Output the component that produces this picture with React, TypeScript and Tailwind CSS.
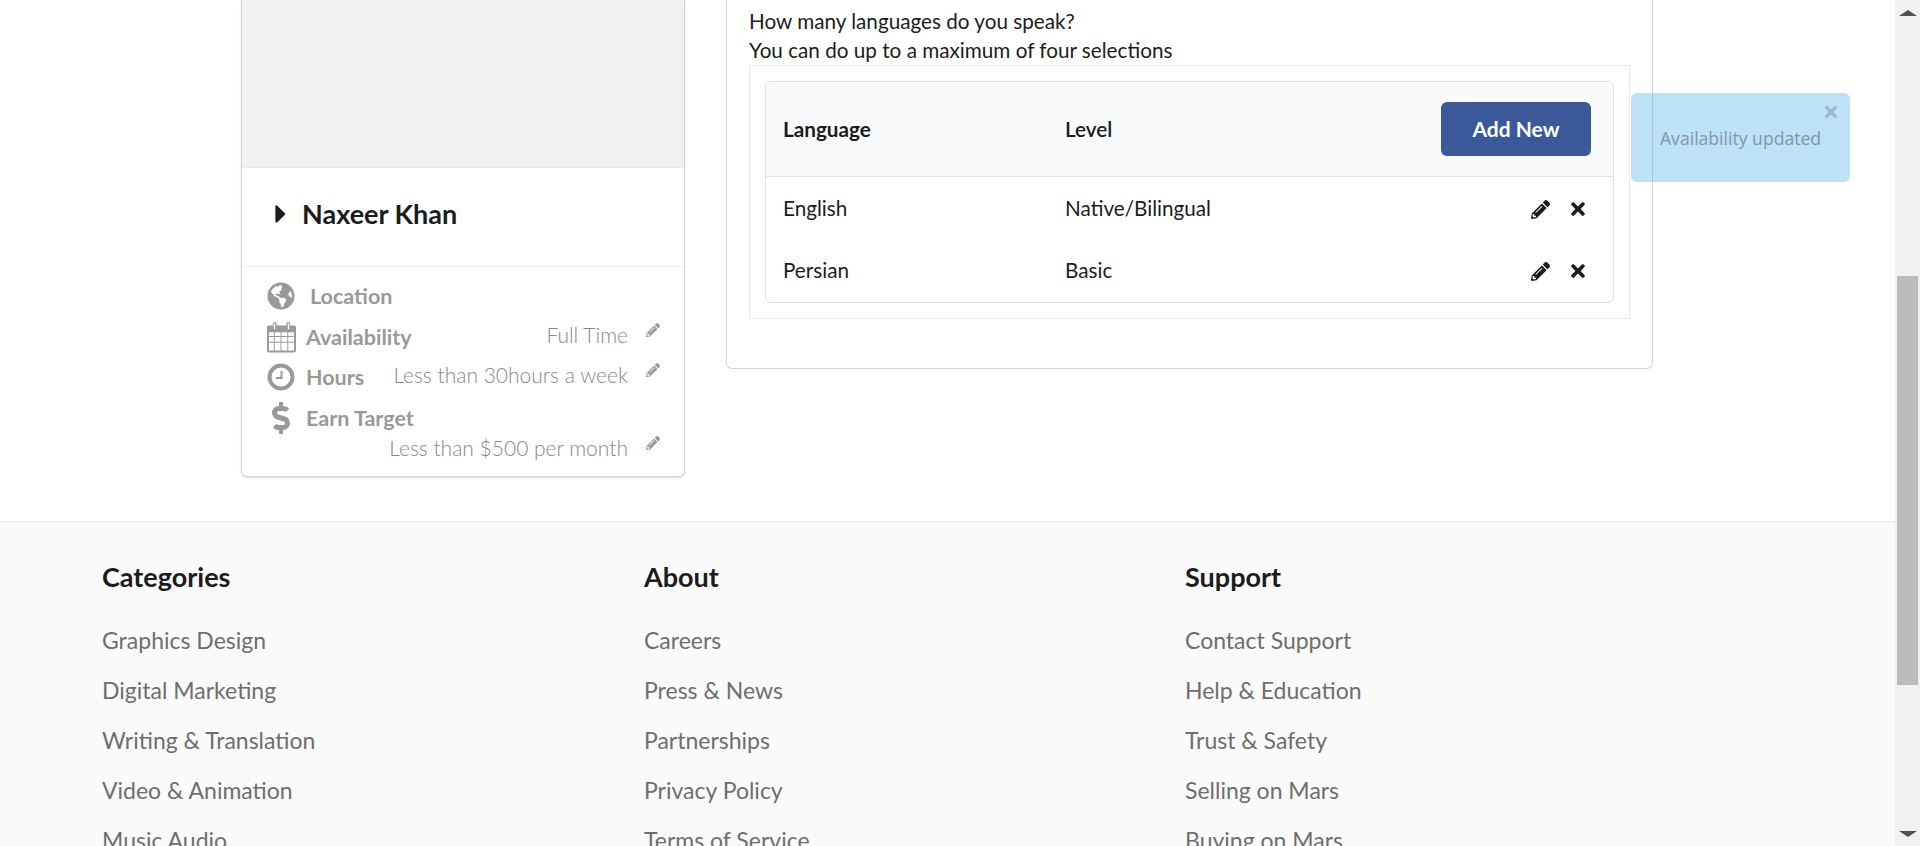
import { FaCaretRight, FaDollarSign, FaGlobeAmericas, FaPencilAlt, FaTimes } from "react-icons/fa";
import type { ReactNode } from "react";

const footerColumns = [
  { title: "Categories", links: ["Graphics Design", "Digital Marketing", "Writing & Translation", "Video & Animation", "Music Audio"] },
  { title: "About", links: ["Careers", "Press & News", "Partnerships", "Privacy Policy", "Terms of Service"] },
  { title: "Support", links: ["Contact Support", "Help & Education", "Trust & Safety", "Selling on Mars", "Buying on Mars"] },
];

const languages = [
  { name: "English", level: "Native/Bilingual" },
  { name: "Persian", level: "Basic" },
];

const CalendarIcon = () => (
  <svg viewBox="0 0 30 32" className="ml-[1px] h-[32px] w-[30px]" fill="#999999">
    <path d="M2 4h4V2.500a2 2 0 0 1 4 0V4h10V2.500a2 2 0 0 1 4 0V4h4a2 2 0 0 1 2 2v24a2 2 0 0 1-2 2H2a2 2 0 0 1-2-2V6a2 2 0 0 1 2-2z" />
    <path
      fill="#ffffff"
      d="M2 11h5v4H2zM8 11h6v4H8zM15 11h6v4h-6zM22 11h6v4h-6zM2 16h5v5H2zM8 16h6v5H8zM15 16h6v5h-6zM22 16h6v5h-6zM2 22h5v8H2zM8 22h6v8H8zM15 22h6v8h-6zM22 22h6v8h-6z"
    />
    <path d="M7 2h1.500v6H7zM21.500 2H23v6h-1.500z" fill="#ffffff" />
  </svg>
);

const ClockIcon = () => (
  <svg viewBox="0 0 28 28" className="h-[28px] w-[28px]" fill="none" stroke="#999999">
    <circle cx="14" cy="14" r="11.500" strokeWidth="4" />
    <path d="M14.500 8v7H9" strokeWidth="2" />
  </svg>
);

const InfoRow = ({ icon, label, value, className }: { icon: ReactNode; label: string; value?: string; className?: string }) => (
  <div className={`flex items-center ${className ?? ""}`}>
    <span className="flex w-[30px] shrink-0 justify-center">{icon}</span>
    <span className="ml-[10px] text-[21.5px] leading-[24px] font-bold text-[#999999]">{label}</span>
    {value && (
      <>
        <span className="-mt-[5px] ml-auto text-[21px] leading-[24px] font-light text-[#888888]">{value}</span>
        <FaPencilAlt className="mb-[14px] ml-[18px] size-[14px] text-[#999999]" />
      </>
    )}
  </div>
);

const ProfileCard = () => (
  <div className="h-[477px] w-[444px] shrink-0 rounded-b-[6px] border-x border-b border-[#d4d4d5] bg-white shadow-[0_1px_2px_rgba(34,36,38,0.15)]">
    <div className="h-[168px] border-b border-[#e8e8e8] bg-[#f1f1f1]" />
    <div className="flex h-[99px] items-center border-b border-[#f2f2f2] pb-[6px] pl-[24px]">
      <FaCaretRight className="size-[30px] text-[#1b1c1d]" />
      <h2 className="ml-[6px] text-[27px] leading-[32px] font-bold text-[#1b1c1d]">Naxeer Khan</h2>
    </div>
    <div className="flex flex-col pt-[14px] pr-[24px] pl-[24px]">
      <div className="flex h-[30px] items-center">
        <span className="flex w-[30px] justify-center">
          <FaGlobeAmericas className="size-[28px] text-[#999999]" />
        </span>
        <span className="ml-[14px] text-[21.5px] leading-[24px] font-bold text-[#999999]">Location</span>
      </div>
      <InfoRow className="mt-[10px] h-[32px]" icon={<CalendarIcon />} label="Availability" value="Full Time" />
      <InfoRow className="mt-[8px] h-[32px]" icon={<ClockIcon />} label="Hours" value="Less than 30hours a week" />
      <InfoRow className="mt-[9px] h-[32px]" icon={<FaDollarSign className="size-[32px] text-[#999999]" />} label="Earn Target" />
      <div className="flex h-[28px] items-center justify-end">
        <span className="text-[21px] leading-[24px] font-light text-[#888888]">Less than $500 per month</span>
        <FaPencilAlt className="mb-[10px] ml-[18px] size-[14px] text-[#999999]" />
      </div>
    </div>
  </div>
);

const LanguagesCard = () => (
  <div className="h-[369px] w-[927px] rounded-b-[6px] border-x border-b border-[#d4d4d5] bg-white pt-[7px] pr-[22px] pl-[22px] text-[20.7px] text-[#1b1c1d]">
    <p className="leading-[29px]">How many languages do you speak?</p>
    <p className="leading-[29px]">You can do up to a maximum of four selections</p>
    <div className="h-[254px] border border-[#e8e8e8] p-[15px]">
      <div className="h-[222px] overflow-hidden rounded-[6px] border border-[#dededf]">
        <div className="flex h-[95px] items-center border-b border-[#e3e3e3] bg-[#f9fafb] pr-[22px] pl-[17px] font-bold">
          <span className="w-[282px] pt-[2px]">Language</span>
          <span className="pt-[2px] font-semibold">Level</span>
          <button className="ml-auto h-[54px] w-[150px] rounded-[6px] bg-[#3b5998] text-[21px] font-bold text-white">Add New</button>
        </div>
        {languages.map((language) => (
          <div key={language.name} className="flex h-[62px] items-center pt-[2px] pr-[23px] pl-[17px]">
            <span className="w-[282px]">{language.name}</span>
            <span>{language.level}</span>
            <FaPencilAlt className="ml-auto size-[19px] text-[#1b1c1d]" />
            <FaTimes className="mr-[2px] ml-[18px] size-[20px] text-[#1b1c1d]" />
          </div>
        ))}
      </div>
    </div>
  </div>
);

const Footer = () => (
  <footer className="grid h-[325px] grid-cols-[542px_541px_1fr] border-t border-[#e5e5e5] bg-[#fafafa] pt-[37px] pl-[102px]">
    {footerColumns.map((column) => (
      <div key={column.title}>
        <h4 className="text-[27px] leading-[36px] font-bold text-[#1b1c1d]">{column.title}</h4>
        <ul className="mt-[20px] flex flex-col text-[23px] leading-[50px] text-[#6e6e6e]">
          {column.links.map((link) => (
            <li key={link}>{link}</li>
          ))}
        </ul>
      </div>
    ))}
  </footer>
);

const ScrollTrack = () => (
  <aside className="flex h-full w-[25px] shrink-0 flex-col items-center bg-[#f1f1f1]">
    <div className="mt-[10px] h-0 w-0 border-x-[9px] border-b-[6px] border-x-transparent border-b-[#505050]" />
    <div className="mt-[260px] h-[409px] w-[21px] bg-[#bcbcbc]" />
    <div className="mt-[146px] h-0 w-0 border-x-[9px] border-t-[6px] border-x-transparent border-t-[#505050]" />
  </aside>
);

const App = () => (
  <div className="relative flex h-[846px] overflow-hidden bg-white font-['Lato','Open_Sans',sans-serif]">
    <main className="min-w-0 flex-1">
      <section className="flex h-[521px] gap-[41px] pl-[241px]">
        <ProfileCard />
        <LanguagesCard />
      </section>
      <Footer />
    </main>
    <ScrollTrack />
    <div className="absolute top-[93px] left-[1631px] h-[89px] w-[219px] rounded-[6px] bg-[#5bb5e6]/40 font-['Open_Sans',sans-serif]">
      <FaTimes className="absolute top-[10px] right-[10px] size-[18px] text-[#9fb8cc]" />
      <p className="pt-[32px] pl-[29px] text-[17.6px] leading-[26px] text-[#7f97a8]">Availability updated</p>
    </div>
  </div>
);

export default App;
